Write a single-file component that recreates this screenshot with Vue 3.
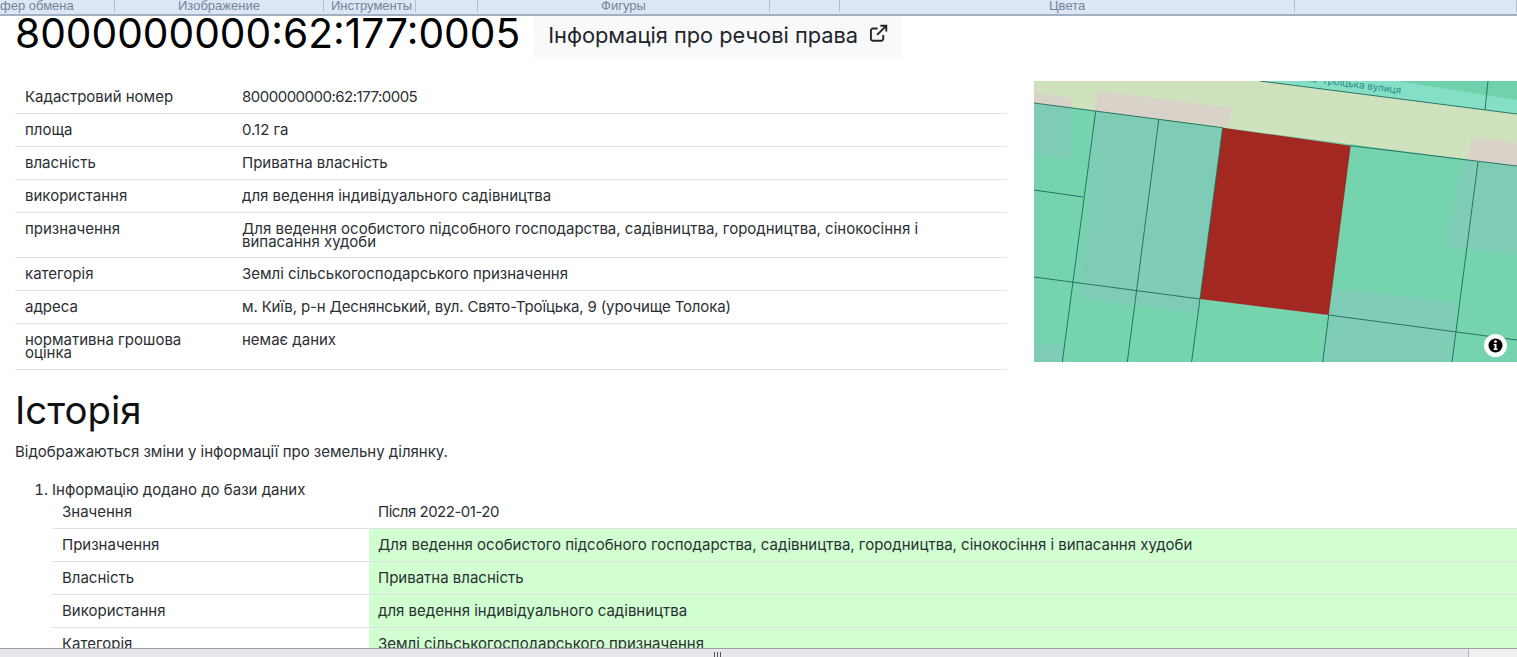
<template>
  <div class="window">
    <div class="ribbon">
      <span v-for="g in ribbon" :key="g.w + g.name" class="group" :style="{ width: g.w + 'px' }">
        <span class="group-name" :style="{ paddingLeft: g.pad + 'px' }">{{ g.name }}</span>
      </span>
    </div>

    <div class="page">
      <div class="head">
        <h1>8000000000:62:177:0005</h1>
        <a class="btn">
          Інформація про речові права
          <svg class="ext" viewBox="0 0 20 20" width="19" height="19" fill="none" stroke="#212529" stroke-width="2">
            <path d="M15 11.5v4a2.2 2.2 0 0 1-2.2 2.2H4.2A2.2 2.2 0 0 1 2 15.5V7a2.2 2.2 0 0 1 2.2-2.2H9" />
            <path d="M8.5 11.5 17.5 2.5" />
            <path d="M12 1.8h6.2V8" />
          </svg>
        </a>
      </div>

      <div class="top">
        <table class="info">
          <tbody>
            <tr v-for="r in info" :key="r[0]">
              <td class="k">{{ r[0] }}</td>
              <td :class="r[2]">{{ r[1] }}</td>
            </tr>
          </tbody>
        </table>

        <div class="map">
          <svg viewBox="0 0 483 281" width="483" height="281">
            <rect width="483" height="281" fill="#75d3ae" />
            <polygon points="0,0 483,0 483,85 0,22" fill="#cfe1bd" />
            <polygon points="226,0 483,0 483,33" fill="#85dfc6" />
            <polygon points="362,0 483,0 483,19" fill="#6fd2ac" />
            <text x="255" y="-2" class="street" transform="rotate(7.5 255 -2)">Свято-Троїцька вулиця</text>

            <polygon points="0,22 38,27 37,78 0,73" fill="#7fccb6" />
            <polygon points="61,30 188.7,46.7 166,218 164,232 46,217" fill="#7fccb6" />
            <polygon points="301,207 424,222 417,281 288,281 294.7,234" fill="#7fccb6" />
            <polygon points="429,80 483,85 483,174 412,166" fill="#7fccb6" />
            <polygon points="0,264 30,264 28,281 0,281" fill="#7fccb6" />

            <polygon points="0,12 38,17 38,27 0,22" fill="#d9d2c8" />
            <polygon points="64,10 197,27 195,46 61,30" fill="#d9d2c8" />
            <polygon points="438,56 483,62 483,85 433,79" fill="#d9d2c8" />

            <polygon points="188.7,46.7 316.7,64.7 294.7,234 166,218" fill="#a32821" />

            <g stroke="#1d6a5a" stroke-width="0.9" fill="none">
              <path d="M0 22 188.7 46.7M316.7 64.7 483 85" />
              <path d="M226 0 483 33" />
              <path d="M61.7 30 28.3 281" />
              <path d="M124.7 39 93.3 281" />
              <path d="M188.7 46.7 157.6 281" />
              <path d="M294.7 234 288.7 281" />
              <path d="M0 109 49 116" />
              <path d="M0 196 166 218M294.7 234 483 259" />
              <path d="M454 0 451 29" />
              <path d="M444 81 418 281" />
            </g>

            <circle cx="461.5" cy="264.5" r="11.5" fill="#fff" />
            <circle cx="461.5" cy="264.5" r="7" fill="#000" />
            <circle cx="461.5" cy="260.6" r="1.4" fill="#fff" />
            <path d="M459.6 263h2.9v4.6h1v1.3h-3.9v-1.3h1v-3.3h-1z" fill="#fff" />
          </svg>
        </div>
      </div>

      <h2>Історія</h2>
      <p class="lead">Відображаються зміни у інформації про земельну ділянку.</p>

      <ol class="changes">
        <li>
          Інформацію додано до бази даних
          <table class="diff">
            <tbody>
              <tr>
                <td class="name">Значення</td>
                <td class="num">Після 2022-01-20</td>
              </tr>
              <tr v-for="r in changes" :key="r[0]">
                <td class="name">{{ r[0] }}</td>
                <td class="added">{{ r[1] }}</td>
              </tr>
            </tbody>
          </table>
        </li>
      </ol>
    </div>

    <div class="hscroll">
      <span class="track"><span class="grip"></span></span>
      <span class="corner"></span>
    </div>
  </div>
</template>

<script setup>
const ribbon = [
  { name: 'фер обмена', w: 115, pad: 0 },
  { name: 'Изображение', w: 209, pad: 63 },
  { name: 'Инструменты', w: 92, pad: 7 },
  { name: '', w: 62, pad: 0 },
  { name: 'Фигуры', w: 292, pad: 123 },
  { name: '', w: 70, pad: 0 },
  { name: 'Цвета', w: 455, pad: 209 },
  { name: '', w: 222, pad: 0 }
]

const info = [
  ['Кадастровий номер', '8000000000:62:177:0005', 'num'],
  ['площа', '0.12 га'],
  ['власність', 'Приватна власність'],
  ['використання', 'для ведення індивідуального садівництва'],
  ['призначення', 'Для ведення особистого підсобного господарства, садівництва, городництва, сінокосіння і випасання худоби'],
  ['категорія', 'Землі сільськогосподарського призначення'],
  ['адреса', 'м. Київ, р-н Деснянський, вул. Свято-Троїцька, 9 (урочище Толока)', 'tight'],
  ['нормативна грошова оцінка', 'немає даних']
]

const changes = [
  ['Призначення', 'Для ведення особистого підсобного господарства, садівництва, городництва, сінокосіння і випасання худоби'],
  ['Власність', 'Приватна власність'],
  ['Використання', 'для ведення індивідуального садівництва'],
  ['Категорія', 'Землі сільськогосподарського призначення']
]
</script>

<style>
html, body { margin: 0; overflow: hidden; background: #fff; }
</style>

<style scoped>
.window { height: 657px; display: flex; flex-direction: column; overflow: hidden; font-family: Inter, "Liberation Sans", sans-serif; color: #2b2f33; font-size: 15px; }

.ribbon { flex: none; height: 14px; display: flex; background: #dde6f4; border-bottom: 2px solid #a3afc4; overflow: hidden; font-family: "Liberation Sans", sans-serif; font-size: 13px; color: #74849b; }
.group { flex: none; height: 12px; border-right: 1px solid #b4bfd0; box-sizing: border-box; line-height: 11px; white-space: nowrap; }

.page { flex: 1; min-height: 0; overflow: hidden; padding-left: 15px; }

.head { display: flex; align-items: flex-start; gap: 13px; height: 41px; }
h1 { margin: 0; font-size: 40.7px; font-weight: 400; line-height: 36px; color: #000; }
.btn { display: flex; align-items: center; gap: 11px; height: 39px; padding: 0 14px 3px 15px; background: #f8f9fa; font-size: 21.8px; color: #212529; margin-top: -1px; }
.ext { flex: none; margin-top: -3px; }

.top { display: flex; gap: 27px; margin-top: 24px; }
.info { width: 992px; flex: none; border-collapse: collapse; align-self: flex-start; }
td { padding: 9px 10px 9.875px; line-height: 13px; vertical-align: top; }
.info tr { border-bottom: 1px solid #dee2e6; }
.info .k { width: 197px; }
.num { letter-spacing: -0.5px; }
.tight { letter-spacing: -0.14px; }
.map { flex: none; width: 483px; height: 281px; }
.map svg { display: block; }
.street { font-family: Inter, sans-serif; font-size: 10px; fill: #2d8c8a; }

h2 { margin: 18px 0 0; font-size: 38.4px; font-weight: 400; line-height: 44px; color: #111; }
.lead { margin: 11px 0 0; line-height: 17px; }

.changes { margin: 22px 0 0; padding-left: 37px; line-height: 16px; }
.diff { width: 100%; border-collapse: collapse; margin-top: -2px; }
.diff tr { border-bottom: 1px solid #dee2e6; }
.diff .name { width: 297px; }
.diff td { white-space: nowrap; }
.diff td + td { padding-left: 9px; }
.added { background: #d1ffd1; }

.hscroll { flex: none; height: 8px; display: flex; border-top: 1px solid #99a39a; background: #f0f0f3; }
.track { width: 1468px; display: flex; justify-content: center; background: #e8e8ec; border-right: 1px solid #b3b3b3; }
.grip { width: 7px; height: 5px; margin: 3px 0 0 -34px; background: repeating-linear-gradient(90deg, #555 0 1px, transparent 1px 3px); }
.corner { flex: 1; }
</style>
